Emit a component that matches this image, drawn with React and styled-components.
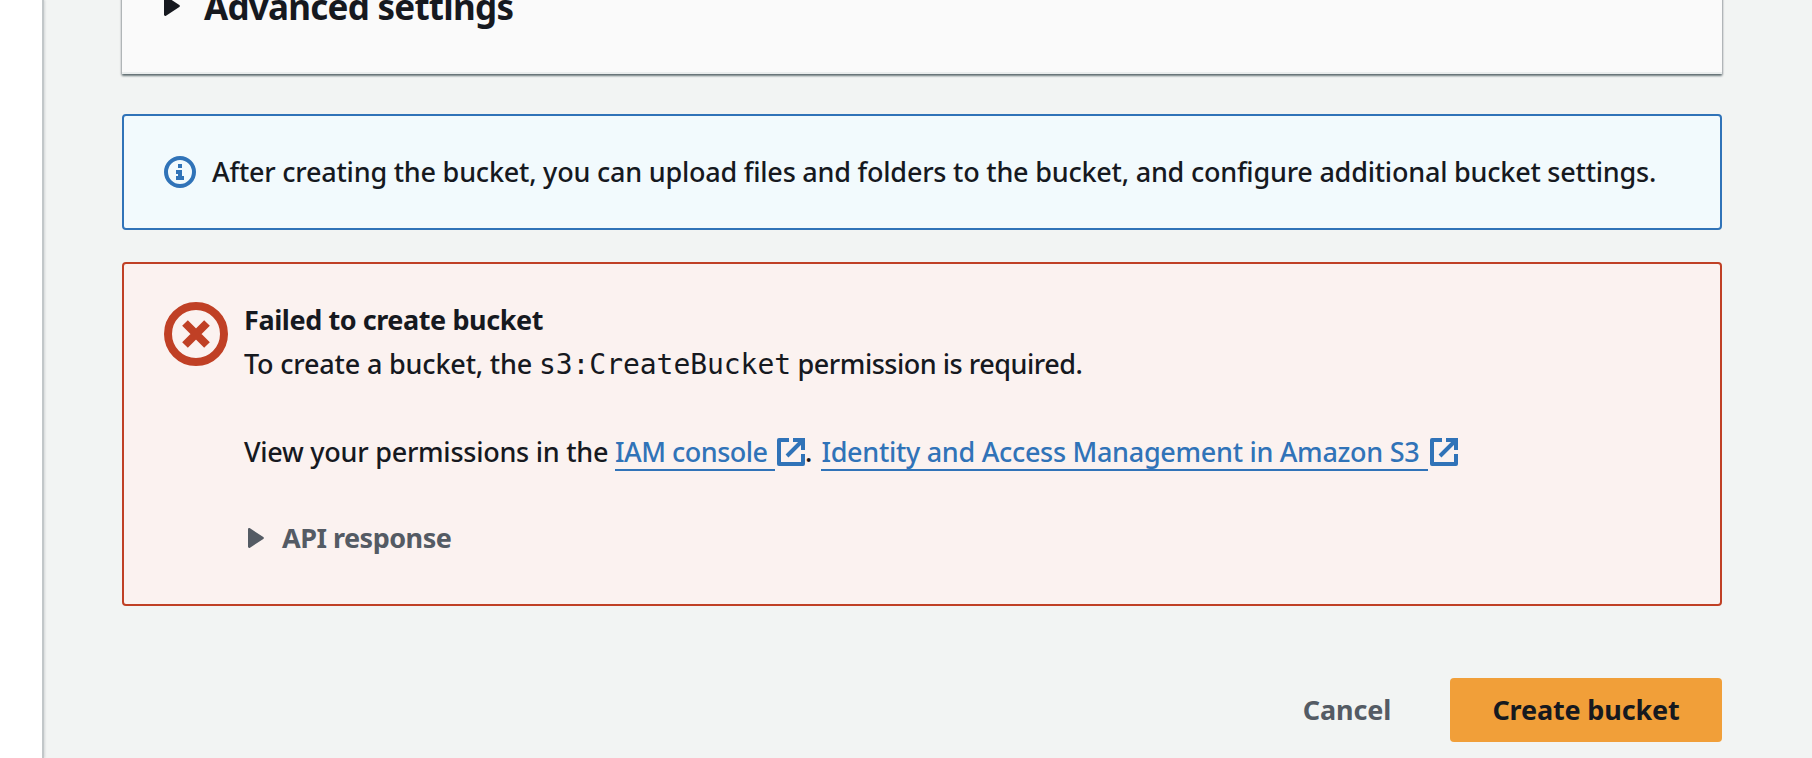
import React from 'react';
import styled, { createGlobalStyle } from 'styled-components';

const color = {
  text: '#16191f',
  muted: '#545b64',
  blue: '#3073b8',
  red: '#c04025',
  page: '#f2f4f3',
};

const GlobalStyle = createGlobalStyle`
  *, *::before, *::after { box-sizing: border-box; }
  body {
    margin: 0;
    overflow: hidden;
    background: ${color.page};
    color: ${color.text};
    font-family: 'Noto Sans', 'Open Sans', sans-serif;
    font-size: 27px;
    font-weight: 500;
    line-height: 44px;
  }
`;

const Page = styled.div`
  display: flex;
  height: 758px;
  overflow: hidden;
`;

const SideRail = styled.aside`
  flex: none;
  width: 44px;
  background: #fff;
  border-right: 2px solid #c2c7c9;
  box-shadow: 1px 0 2px rgba(0, 28, 36, 0.12);
`;

const Content = styled.main`
  flex: 1;
  display: flex;
  flex-direction: column;
  padding: 0 90px 0 78px;
`;

const Card = styled.section`
  flex: none;
  height: 94px;
  margin-top: -20px;
  padding: 5px 0 0 42px;
  background: #fafafa;
  border-bottom: 2px solid #eaeded;
  box-shadow: 0 2px 2px 0 rgba(0, 28, 36, 0.45), 1px 1px 2px 0 rgba(0, 7, 22, 0.2), -1px 1px 2px 0 rgba(0, 7, 22, 0.2);
`;

const Expander = styled.div`
  display: flex;
  align-items: center;
  gap: ${(p) => p.$gap}px;
  color: ${(p) => p.$color};
`;

const SectionTitle = styled.h2`
  margin: 0;
  font-size: 35px;
  font-weight: 700;
  line-height: 44px;
  letter-spacing: -0.75px;
  white-space: nowrap;
`;

const CaretSvg = styled.svg`
  flex: none;
  display: block;
  margin-top: ${(p) => p.$shift}px;
`;

const Alert = styled.section`
  flex: none;
  display: flex;
  align-items: flex-start;
  border: 2px solid ${(p) => p.$line};
  border-radius: 4px;
  background: ${(p) => p.$fill};
`;

const InfoAlert = styled(Alert)`
  height: 116px;
  margin-top: 40px;
  padding: 34px 40px;
  gap: 16px;
`;

const ErrorAlert = styled(Alert)`
  height: 344px;
  margin-top: 32px;
  padding: 34px 40px;
  gap: 16px;
`;

const StatusIcon = styled.svg`
  flex: none;
  display: block;
  margin-top: ${(p) => p.$top}px;
`;

const Line = styled.p`
  margin: 0;
  white-space: nowrap;
  letter-spacing: ${(p) => p.$track ?? -0.22}px;
`;

const AlertTitle = styled(Line)`
  font-weight: 700;
`;

const LinkLine = styled(Line)`
  margin-top: 44px;
  display: flex;
`;

const Code = styled.code`
  font-family: 'DejaVu Sans Mono', monospace;
  font-size: 28px;
  line-height: 1;
  font-weight: 400;
  letter-spacing: -0.05px;
`;

const Tight = styled.span`
  letter-spacing: -0.48px;
`;

const Link = styled.a`
  display: flex;
  align-items: flex-start;
  color: ${color.blue};
  letter-spacing: ${(p) => p.$track}px;
`;

const LinkText = styled.span`
  white-space: pre;
  height: 41px;
  border-bottom: 2px solid ${color.blue};
  padding-right: ${(p) => p.$tail}px;
`;

const LinkIcon = styled.svg`
  display: block;
  margin: 8px 0 0 2px;
`;

const Plain = styled.span`
  white-space: pre;
  letter-spacing: ${(p) => p.$track}px;
`;

const ApiRow = styled(Expander)`
  margin-top: 42px;
  padding-left: 4px;
`;

const ApiLabel = styled.span`
  font-weight: 700;
  letter-spacing: -0.5px;
`;

const Actions = styled.footer`
  flex: none;
  display: flex;
  justify-content: flex-end;
  gap: 16px;
  margin-top: 72px;
`;

const Button = styled.button`
  width: ${(p) => p.$width}px;
  height: 64px;
  padding: 0;
  border: 0;
  border-radius: 4px;
  background: ${(p) => (p.$primary ? '#f19f39' : 'transparent')};
  color: ${(p) => (p.$primary ? color.text : color.muted)};
  font: inherit;
  font-weight: 700;
  letter-spacing: ${(p) => p.$track}px;
`;

function Caret({ shift = 0 }) {
  return (
    <CaretSvg $shift={shift} width="16" height="20" viewBox="0 0 16 20" fill="currentColor">
      <path d="M0 1.2C0 .2 1.1-.3 2 .2L15.3 9.1C16.1 9.6 16.1 10.4 15.3 10.9L2 19.8C1.1 20.3 0 19.8 0 18.8Z" />
    </CaretSvg>
  );
}

function ExternalIcon() {
  return (
    <LinkIcon width="28" height="28" viewBox="0 0 28 28" fill="none" stroke="currentColor" strokeWidth="4">
      <path d="M12 2H2V26H26V16" strokeLinejoin="round" />
      <path d="M16 2H26V12M26 2L10 18" />
    </LinkIcon>
  );
}

export default function App() {
  return (
    <>
      <GlobalStyle />
      <Page>
        <SideRail />
        <Content>
          <Card>
            <Expander $gap={24} $color={color.text}>
              <Caret shift={-2} />
              <SectionTitle>Advanced settings</SectionTitle>
            </Expander>
          </Card>

          <InfoAlert $line={color.blue} $fill="#f2fafd">
            <StatusIcon $top={6} width="32" height="32" viewBox="0 0 32 32" fill={color.blue}>
              <circle cx="16" cy="16" r="14" fill="none" stroke={color.blue} strokeWidth="4" />
              <path d="M14 8h4v4h-4zM12 14h6v6h2v4h-8v-4h2v-2h-2z" />
            </StatusIcon>
            <Line>
              After creating the bucket, you can upload files and folders to the bucket, and configure additional bucket settings.
            </Line>
          </InfoAlert>

          <ErrorAlert $line={color.red} $fill="#fbf2f0">
            <StatusIcon $top={4} width="64" height="64" viewBox="0 0 64 64" fill="none" stroke={color.red} strokeWidth="8">
              <circle cx="32" cy="32" r="28" />
              <path d="M21 21L43 43M43 21L21 43" />
            </StatusIcon>
            <div>
              <AlertTitle $track={-0.42}>Failed to create bucket</AlertTitle>
              <Line $track={-0.18}>
                To create a bucket, the <Code>s3:CreateBucket</Code><Tight> permission is required.</Tight>
              </Line>
              <LinkLine>
                <Plain $track={-0.26}>View your permissions in the </Plain>
                <Link $track={-0.5}>
                  <LinkText $tail={7.5}>IAM console</LinkText>
                  <ExternalIcon />
                </Link>
                <Plain $track={1}>. </Plain>
                <Link $track={-0.3}>
                  <LinkText $tail={9}>Identity and Access Management in Amazon S3</LinkText>
                  <ExternalIcon />
                </Link>
              </LinkLine>
              <ApiRow $gap={18} $color={color.muted}>
                <Caret />
                <ApiLabel>API response</ApiLabel>
              </ApiRow>
            </div>
          </ErrorAlert>

          <Actions>
            <Button $width={174} $track={-0.1}>Cancel</Button>
            <Button $primary $width={272} $track={-0.15}>Create bucket</Button>
          </Actions>
        </Content>
      </Page>
    </>
  );
}
